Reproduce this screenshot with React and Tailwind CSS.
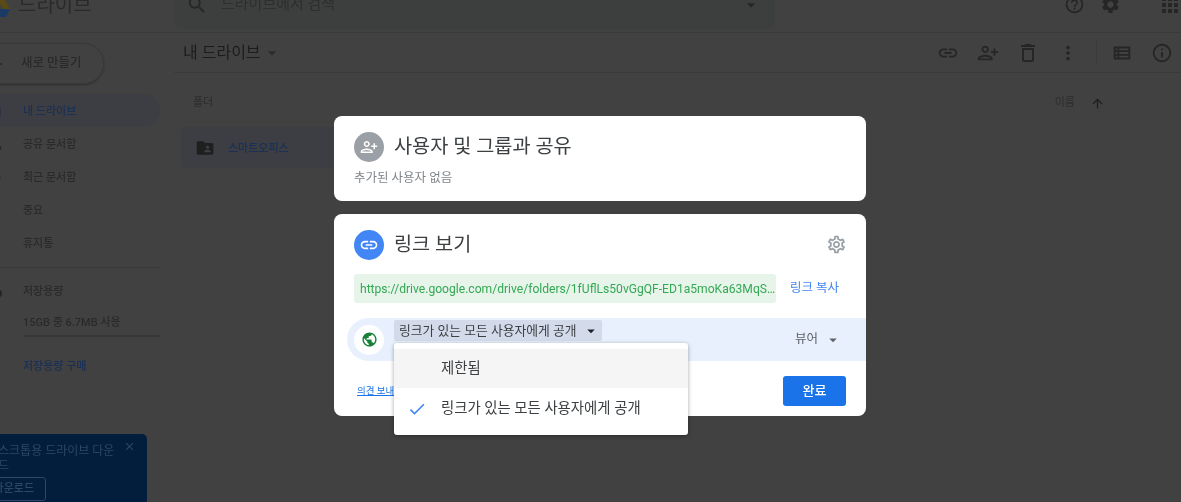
import React from "react";
import {
  MdOutlineSettings, MdPersonAddAlt, MdLink, MdDeleteOutline, MdMoreVert, MdOutlineViewList,
  MdInfoOutline, MdHelpOutline, MdSearch, MdApps, MdPublic, MdCheck, MdArrowUpward, MdFolderShared,
  MdArrowDropDown, MdClose, MdSettings, MdFolder, MdPeople, MdOutlineAccessTime, MdStarBorder, MdOutlineCloudQueue, MdAdd,
} from "react-icons/md";

const font = "font-['Roboto','Noto_Sans_CJK_KR',sans-serif]";

function NavRow({ label, active, Icon }) {
  return (
    <div className={`h-[33px] flex items-center text-[11px] font-medium ${active ? "text-[#1a3054]" : "text-[#2a2a2a]"}`}>
      <Icon className={`-ml-[18px] mr-[21px] shrink-0 ${active ? "text-[#14294a]" : "text-[#222222]"}`} size={20} />
      <span className="mt-[3px]">{label}</span>
    </div>
  );
}

function Sidebar() {
  return (
    <aside className="w-[174px] shrink-0 relative h-[469px]">
      <div className="mt-[10px] -ml-[40px] w-[144px] h-[41px] rounded-full border border-[#383838] shadow-[0_1px_2px_rgba(0,0,0,0.3)] flex items-center text-[12.5px] font-medium text-[#2a2a2a]">
        <MdAdd className="ml-[25px] mr-[17px] text-[#14294a]" size={20} />
        <span className="-mt-[1px] ml-[-2px]">새로 만들기</span>
      </div>
      <div className="mt-[10px] w-[160px] h-[33px] rounded-r-full bg-[#3c3e43]">
        <NavRow label="내 드라이브" active Icon={MdFolder} />
      </div>
      <NavRow label="공유 문서함" Icon={MdPeople} />
      <NavRow label="최근 문서함" Icon={MdOutlineAccessTime} />
      <NavRow label="중요" Icon={MdStarBorder} />
      <NavRow label="휴지통" Icon={MdDeleteOutline} />
      <div className="mt-[8px] w-[160px] h-px bg-[#3a3a3a]" />
      <div className="mt-[12px] flex items-center text-[11px] font-medium text-[#2a2a2a] leading-[18px]">
        <MdOutlineCloudQueue className="-ml-[18px] mr-[21px] text-[#222222]" size={20} />
        <span className="mt-[3px]">저장용량</span>
      </div>
      <div className="mt-[13px] pl-[23px] text-[11px] font-medium text-[#2a2a2a] leading-[18px]">15GB 중 6.7MB 사용</div>
      <div className="ml-[23px] mt-[3px] w-[137px] h-[2px] bg-[#373737]" />
      <div className="mt-[21px] pl-[23px] text-[11px] font-medium text-[#1a3054] leading-[18px]">저장용량 구매</div>
      <div className="absolute left-[-20px] bottom-[-40px] w-[167px] h-[108px] rounded-[5px] bg-[#031d3d] pl-[7px] pt-[10px] text-[#2f4666]">
        <div className="w-[131px] text-[12px] leading-[15px]">데스크톱용 드라이브 다운로드</div>
        <div className="mt-[3px] ml-[-7px] w-[66px] h-[24px] rounded-[3px] border border-[#2f4666] text-[11px] font-medium flex items-center justify-end pr-[11px]">다운로드</div>
        <MdClose className="absolute top-[6px] right-[11px] text-[#2f4666]" size={13} />
      </div>
    </aside>
  );
}

function Main() {
  return (
    <main className="flex-1 min-w-0">
      <div className="h-[40px] border-b border-[#3a3a3a] flex items-center">
        <div className="ml-[9px] flex items-center text-[16px] text-[#1c1c1c]">
          내 드라이브
          <MdArrowDropDown className="ml-[1px] text-[#2c2c2c]" size={20} />
        </div>
        <div className="ml-auto flex items-center text-[#262626] mr-[-1px]">
          <div className="w-[40px] flex justify-center"><MdLink size={22} /></div>
          <div className="w-[40px] flex justify-center"><MdPersonAddAlt size={22} /></div>
          <div className="w-[40px] flex justify-center"><MdDeleteOutline size={24} /></div>
          <div className="w-[40px] flex justify-center"><MdMoreVert size={22} /></div>
          <div className="ml-[8px] w-px h-[24px] bg-[#3a3a3a]" />
          <div className="ml-[5px] w-[40px] flex justify-center"><MdOutlineViewList size={22} /></div>
          <div className="w-[40px] flex justify-center"><MdInfoOutline size={22} /></div>
        </div>
      </div>
      <div className="h-[60px] flex items-center pl-[19px] pr-[76px] text-[11px] text-[#2c2c2c]">
        <span>폴더</span>
        <span className="ml-auto">이름</span>
        <MdArrowUpward className="ml-[15px] text-[#1e1e1e]" size={15} />
      </div>
      <div className="-mt-[6px] ml-[7px] w-[300px] h-[41px] rounded-[4px] bg-[#3c3e43] flex items-center pl-[14px] text-[11px] font-medium text-[#1a3054]">
        <MdFolderShared className="text-[#1f1f1f]" size={20} />
        <span className="ml-[13px] mt-[3px]">스마트오피스</span>
      </div>
    </main>
  );
}

function Dialog() {
  return (
    <div className="absolute left-[334px] top-[116px] w-[532px] flex flex-col gap-[13px]">
      <section className="h-[85px] rounded-[8px] bg-white px-[20px] pt-[16px]">
        <div className="flex items-center gap-[10px]">
          <div className="w-[30px] h-[30px] rounded-full bg-[#9aa0a6] flex items-center justify-center text-white"><MdPersonAddAlt size={18} /></div>
          <div className="text-[19.7px] leading-[30px] text-[#3c4043]">사용자 및 그룹과 공유</div>
        </div>
        <div className="mt-[7px] text-[12.5px] leading-[18px] text-[#80868b]">추가된 사용자 없음</div>
      </section>
      <section className="relative h-[202px] rounded-[8px] bg-white">
        <div className="flex items-center gap-[10px] pl-[20px] pr-[19px] pt-[16px]">
          <div className="w-[30px] h-[30px] rounded-full bg-[#4285f4] flex items-center justify-center text-white"><MdLink size={20} /></div>
          <div className="text-[19.7px] leading-[30px] text-[#3c4043]">링크 보기</div>
          <MdOutlineSettings className="ml-auto -mt-[1px] text-[#9aa0a6]" size={21} />
        </div>
        <div className="flex items-center pl-[20px] mt-[14px]">
          <div className="w-[422px] h-[29px] rounded-[3px] bg-[#e6f4ea] flex items-center px-[6px] text-[12.1px] text-[#34a853] leading-[16px]">
            <span className="whitespace-nowrap">https://drive.google.com/drive/folders/1fUflLs50vGgQF-ED1a5moKa63MqS…</span>
          </div>
          <span className="ml-[14px] text-[12.5px] text-[#4285f4]">링크 복사</span>
        </div>
        <div className="mt-[15px] ml-[13px] h-[43px] w-[519px] rounded-l-full bg-[#e8f0fe] flex items-center pl-[7px] pr-[24px]">
          <div className="w-[30px] h-[30px] rounded-full bg-white flex items-center justify-center text-[#188038]"><MdPublic size={17} /></div>
          <div className="ml-[10px] mb-[17px] mt-[-1px] h-[21px] w-[208px] rounded-[2px] bg-[#d3dbea] flex items-center pl-[5px] text-[12.8px] text-[#3c4043]">
            링크가 있는 모든 사용자에게 공개
            <MdArrowDropDown className="ml-[5px] text-[#202124]" size={18} />
          </div>
          <div className="ml-auto flex items-center text-[12.5px] text-[#5f6368]">
            뷰어
            <MdArrowDropDown className="ml-[6px]" size={18} />
          </div>
        </div>
        <div className="flex items-center pl-[23px] pr-[20px] mt-[15px]">
          <span className="text-[9.5px] text-[#1a73e8] underline">의견 보내기</span>
          <div className="ml-auto w-[63px] h-[30px] rounded-[3px] bg-[#1a73e8] flex items-center justify-center text-white text-[13px] font-medium">완료</div>
        </div>
        <div className="absolute left-[60px] top-[129px] w-[294px] h-[92px] rounded-[3px] bg-white py-[6px] shadow-[0_1px_4px_rgba(0,0,0,0.35)]">
          <div className="h-[39px] bg-[#f5f5f5] flex items-center pt-[1px] pl-[47px] text-[14.4px] text-[#3c4043]">제한됨</div>
          <div className="h-[40px] flex items-center pt-[1px] pl-[13px] text-[14.4px] text-[#3c4043]">
            <MdCheck className="text-[#4285f4]" size={20} />
            <span className="ml-[14px]">링크가 있는 모든 사용자에게 공개</span>
          </div>
        </div>
      </section>
    </div>
  );
}

export default function App() {
  return (
    <div className={`relative w-[1181px] h-[502px] overflow-hidden bg-[#414141] blur-[0.35px] ${font}`}>
      <header className="-mt-[23px] h-[56px] border-b border-[#3a3a3a] flex items-center relative">
        <svg className="absolute left-[-11px] top-[20px]" width="21" height="20" viewBox="0 0 21 20">
          <path d="M7 0h7l7 12H14z" fill="#5c4a14" />
          <path d="M4 20l4-8h13l-4 8z" fill="#1c3a66" />
          <path d="M7 0L0 12l4 8 7-13z" fill="#134a28" />
        </svg>
        <div className="ml-[18px] w-[156px] text-[20px] text-[#2a2a2a]">드라이브</div>
        <div className="w-[601px] h-[48px] rounded-[8px] bg-[#3d3f3e] flex items-center pl-[12px] pr-[14px] text-[#262626]">
          <MdSearch size={22} />
          <span className="ml-[13px] text-[15px] text-[#2e2e2e]">드라이브에서 검색</span>
          <MdArrowDropDown className="ml-auto" size={20} />
        </div>
        <div className="ml-auto flex items-center text-[#262626] mr-[-1px]">
          <MdHelpOutline size={21} />
          <MdSettings className="ml-[15px]" size={21} />
          <MdApps className="ml-[37px]" size={24} />
        </div>
      </header>
      <div className="flex">
        <Sidebar />
        <Main />
      </div>
      <Dialog />
    </div>
  );
}
